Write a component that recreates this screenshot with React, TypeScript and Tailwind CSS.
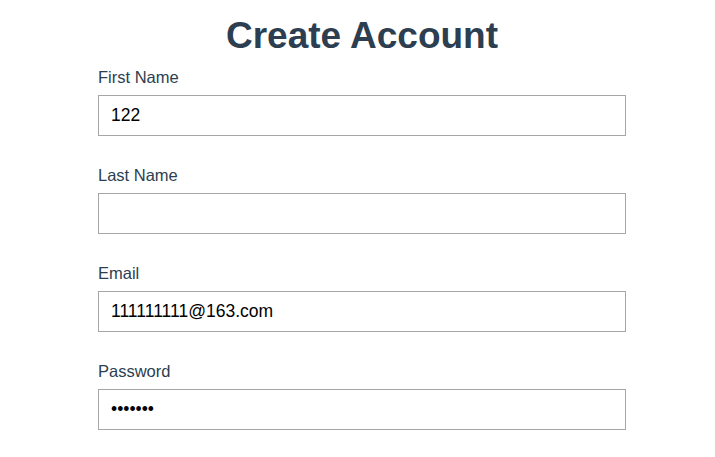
const fields = [
  { label: "First Name", type: "text", value: "122" },
  { label: "Last Name", type: "text", value: "" },
  { label: "Email", type: "email", value: "111111111@163.com" },
  { label: "Password", type: "password", value: "1234567" },
];

export default function App() {
  return (
    <div className="min-h-screen bg-white font-['Liberation_Sans',Arial,sans-serif] text-[#2c3e50]">
      <div className="flex justify-center pl-[9px]">
        <form className="w-[528px] flex flex-col">
          <h1 className="mt-[14px] mb-[9px] text-center text-[37px] font-bold leading-[44px]">
            Create Account
          </h1>
          <div className="flex flex-col gap-[29px]">
            {fields.map((f) => (
              <div key={f.label} className="flex flex-col">
                <label className="text-[16.5px] leading-[20px] mb-[8px]">{f.label}</label>
                <input
                  type={f.type}
                  defaultValue={f.value}
                  className="h-[41px] w-full border border-[#a6a6a6] px-[12px] text-[17.5px] text-black outline-none"
                />
              </div>
            ))}
          </div>
        </form>
      </div>
    </div>
  );
}
